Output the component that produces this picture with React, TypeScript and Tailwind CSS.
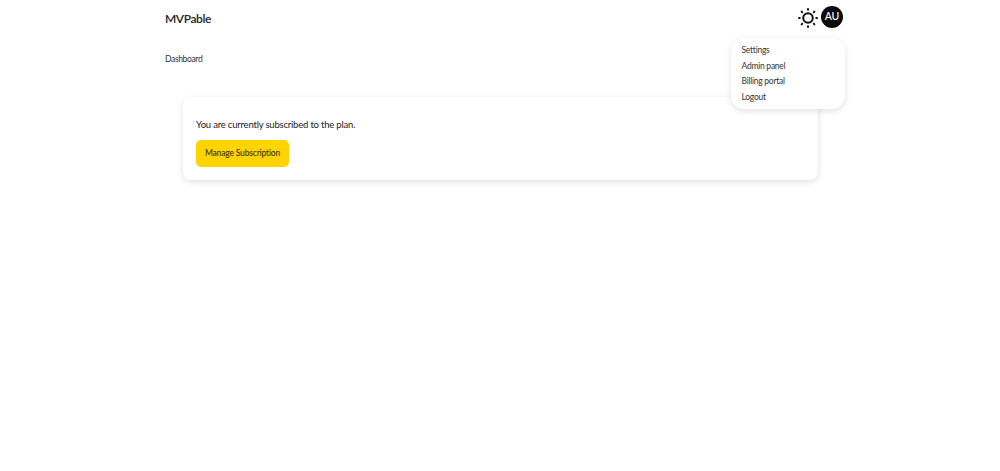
const menuItems = ['Settings', 'Admin panel', 'Billing portal', 'Logout'];

function SunIcon() {
  const rays = [0, 45, 90, 135, 180, 225, 270, 315];
  return (
    <svg viewBox="0 0 24 24" className="mt-[2px] h-[22px] w-[22px]" fill="none" stroke="#111" strokeWidth="2.2" strokeLinecap="round">
      <circle cx="12" cy="12" r="5.2" />
      {rays.map((deg) => (
        <line key={deg} x1="12" y1="2.2" x2="12" y2="3" transform={`rotate(${deg} 12 12)`} />
      ))}
    </svg>
  );
}

function UserMenu() {
  return (
    <div className="absolute right-[-2px] top-[38px] z-10 h-[71px] w-[114px] rounded-[13px] bg-white pl-[10.5px] pr-[11px] pt-[5px] shadow-[0_2px_6px_rgba(0,0,0,0.12)]">
      {menuItems.map((item) => (
        <div key={item} className="flex h-[15.5px] items-center text-[8.5px] tracking-[-0.25px] text-[#333]">
          {item}
        </div>
      ))}
    </div>
  );
}

export default function App() {
  return (
    <div className="min-h-[471px] bg-white font-['Lato','Noto_Sans',sans-serif] text-[#333]">
      <div className="mx-auto w-[686px] pl-[8px]">
        <header className="relative flex h-[36px] items-center justify-between">
          <span className="pt-[1px] text-[12px] font-semibold tracking-[-0.4px] text-[#222]">MVPable</span>
          <div className="-mt-[2px] flex items-center gap-[2px]">
            <SunIcon />
            <div className="flex h-[22px] w-[22px] items-center justify-center rounded-full bg-[#0b0b0b] text-[10.5px] font-medium text-white">
              AU
            </div>
          </div>
          <UserMenu />
        </header>
        <p className="mt-[17px] text-[8.5px] leading-[12px] tracking-[-0.35px] text-[#333]">Dashboard</p>
        <main className="ml-[18px] mt-[32px] w-[635px] rounded-[8px] bg-white px-[13px] pb-[13px] pt-[21px] shadow-[0_2px_6px_rgba(0,0,0,0.12)]">
          <p className="text-[9.5px] leading-[14px] tracking-[-0.2px] text-[#222]">You are currently subscribed to the plan.</p>
          <button className="mt-[8px] flex h-[27px] w-[93px] items-center justify-center rounded-[5px] bg-[#ffd400] text-[8.5px] font-medium tracking-[-0.18px] text-[#3a3200]">
            Manage Subscription
          </button>
        </main>
      </div>
    </div>
  );
}
